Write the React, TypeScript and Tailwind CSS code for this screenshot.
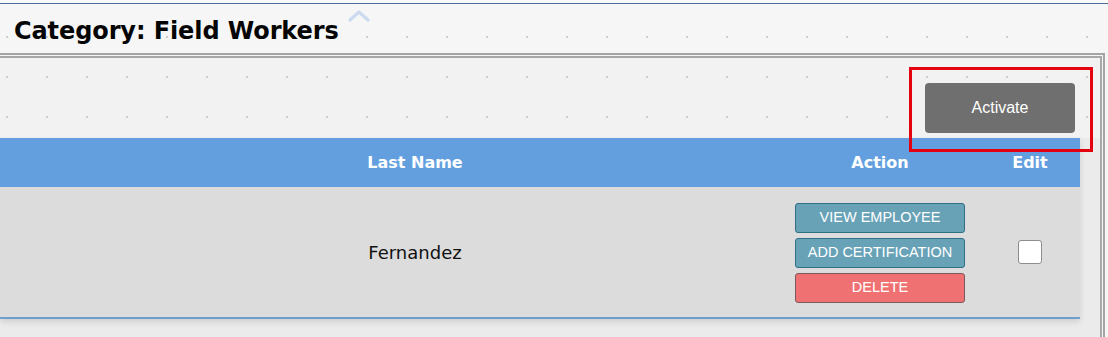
import React from "react";

const dots =
  "bg-[radial-gradient(circle,#cdcdcd_0.7px,transparent_1.1px)] bg-[size:40px_40px] bg-[position:-13px_17px] bg-fixed";

export default function App() {
  return (
    <div className="w-[1108px] h-[337px] overflow-hidden relative bg-[#fafafa] pt-[3px] font-['DejaVu_Sans',Verdana,sans-serif]">
      <div className="h-px bg-[#4d6d9b]" />
      <div className={`bg-[#f6f6f6] ${dots}`}>
        {/* Title */}
        <div className="h-[49px] flex items-start pl-[14px] pt-[12px] relative">
          <h1 className="text-[24px] leading-[30px] font-bold text-[#050505] tracking-[-0.1px]">
            Category: Field Workers
          </h1>
          <svg
            className="absolute left-[348px] top-[4px]"
            width="22"
            height="14"
            viewBox="0 0 22 14"
          >
            <polyline
              points="2,12 11,4 20,12"
              fill="none"
              stroke="#cbdaee"
              strokeWidth="3.2"
              strokeLinecap="round"
              strokeLinejoin="round"
            />
          </svg>
        </div>

        {/* Panel */}
        <div className="mr-[3px] border-t-2 border-r-2 border-[#a4a4a4] pt-px pr-px">
          <div className="border-t-2 border-r-2 border-[#a8a8a8]">
            <div className={`bg-[#f2f2f2] ${dots}`}>
              {/* toolbar */}
              <div className="h-[80px] flex justify-end items-start pt-[25px] pr-[25px]">
                <button className="w-[150px] h-[50px] rounded-[4px] bg-[#6f6f6f] text-white text-[16px] font-['Liberation_Sans',Arial,sans-serif]">
                  Activate
                </button>
              </div>
            </div>
            {/* table section */}
            <div className="bg-[#ebebeb] pr-[20px] pb-[30px]">
              <div className="shadow-[0_3px_6px_rgba(0,0,0,0.12)]">
                <div className="grid grid-cols-[50px_730px_200px_100px] h-[49px] bg-[#639fdf] text-white font-bold text-[16px] items-center">
                  <div />
                  <div className="text-center">Last Name</div>
                  <div className="text-center">Action</div>
                  <div className="text-center">Edit</div>
                </div>
                <div className="grid grid-cols-[50px_730px_200px_100px] h-[132px] bg-[#dddcdc] border-b-2 border-[#6f9dcf] items-center">
                  <div />
                  <div className="text-center text-[18px] text-[#111] pt-px">Fernandez</div>
                  <div className="flex flex-col items-center gap-[5px] pt-[1px]">
                    <button className="w-[170px] h-[30px] rounded-[3px] bg-[#68a2b7] border border-[#2f7083] text-white text-[14.5px] font-['Liberation_Sans',Arial,sans-serif]">
                      VIEW EMPLOYEE
                    </button>
                    <button className="w-[170px] h-[30px] rounded-[3px] bg-[#68a2b7] border border-[#2f7083] text-white text-[14.5px] font-['Liberation_Sans',Arial,sans-serif]">
                      ADD CERTIFICATION
                    </button>
                    <button className="w-[170px] h-[30px] rounded-[3px] bg-[#f07171] border border-[#7b5a5e] text-white text-[14.5px] font-['Liberation_Sans',Arial,sans-serif]">
                      DELETE
                    </button>
                  </div>
                  <div className="flex justify-center">
                    <div className="w-[24px] h-[24px] bg-white border border-[#8d8d8d] rounded-[3px]" />
                  </div>
                </div>
              </div>
            </div>
          </div>
        </div>
      </div>

      {/* red annotation */}
      <div className="absolute left-[909px] top-[67px] w-[184px] h-[85px] border-[3px] border-[#e3000f] pointer-events-none" />
    </div>
  );
}
